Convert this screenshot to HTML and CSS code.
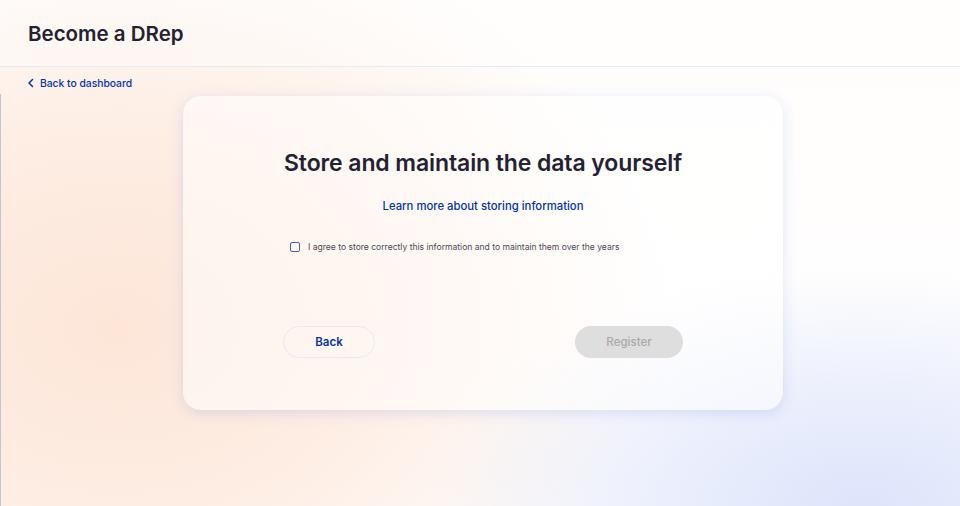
FILE: index.html
```html
<!DOCTYPE html>
<html lang="en">
<head>
<meta charset="utf-8">
<title>Become a DRep</title>
<link rel="stylesheet" href="styles.css">
</head>
<body>
<div class="page">
  <header class="topbar">
    <h1 class="title">Become a DRep</h1>
  </header>
  <a class="back-link" href="#">
    <svg class="chev" width="8" height="10" viewBox="0 0 8 10" aria-hidden="true"><path d="M5.5 1.5 L2 5 L5.5 8.5" fill="none" stroke="currentColor" stroke-width="1.5" stroke-linecap="round" stroke-linejoin="round"/></svg>
    <span>Back to dashboard</span>
  </a>
  <main class="main">
    <section class="card">
      <h2 class="card-title">Store and maintain the data yourself</h2>
      <a class="learn" href="#">Learn more about storing information</a>
      <label class="agree">
        <span class="box"></span>
        <span class="agree-text">I agree to store correctly this information and to maintain them over the years</span>
      </label>
      <div class="actions">
        <button class="btn btn-back">Back</button>
        <button class="btn btn-register" disabled>Register</button>
      </div>
    </section>
  </main>
</div>
</body>
</html>
```

FILE: styles.css
```css
* { box-sizing: border-box; }
html, body { margin: 0; padding: 0; }
body {
  width: 960px;
  height: 506px;
  overflow: hidden;
  font-family: "Inter", "Open Sans", sans-serif;
  color: #242232;
  background:
    radial-gradient(ellipse 440px 240px at 90% 100%, #dde4fb 0%, rgba(221,228,251,0.6) 45%, rgba(221,228,251,0) 100%),
    radial-gradient(ellipse 560px 420px at 12% 65%, #fde6d8 0%, rgba(253,230,216,0.7) 45%, rgba(253,230,216,0) 100%),
    linear-gradient(180deg, #fffdfc 0%, #ffffff 100%);
}
.page { display: flex; flex-direction: column; height: 506px; }
.topbar {
  height: 67px;
  border-bottom: 1px solid #e6ebf7;
  padding-left: 28px;
  display: flex;
  align-items: center;
  background: rgba(255,255,255,0.35);
}
.title {
  margin: 0;
  font-size: 20.5px;
  font-weight: 600;
  color: #242232;
}
.back-link {
  display: flex;
  align-items: center;
  gap: 5px;
  padding: 8px 0 4px 27px;
  color: #0033ad;
  text-decoration: none;
  font-size: 10.3px;
  font-weight: 500;
  height: 27px;
}
.chev { display: block; }
.main {
  flex: 1;
  border-left: 1px solid #c2c6d3;
  display: flex;
  justify-content: center;
  align-items: flex-start;
  padding-left: 5px;
  padding-top: 2px;
}
.card {
  width: 600px;
  height: 314px;
  border-radius: 18px;
  background: rgba(255,255,255,0.5);
  box-shadow: 0 3px 14px rgba(63,98,220,0.16);
  padding: 53px 100px 0;
  display: flex;
  flex-direction: column;
  align-items: center;
}
.card-title {
  margin: 0;
  font-size: 23px;
  font-weight: 600;
  color: #242232;
  letter-spacing: -0.1px;
  line-height: 28px;
}
.learn {
  margin-top: 21px;
  color: #0033ad;
  text-decoration: none;
  font-size: 11.3px;
  font-weight: 500;
  line-height: 16px;
}
.agree {
  margin-top: 26px;
  align-self: stretch;
  display: flex;
  align-items: center;
  gap: 8px;
  padding-left: 7px;
}
.box {
  width: 10px;
  height: 10px;
  border: 1.5px solid #3f5fc9;
  border-radius: 2px;
  flex: none;
}
.agree-text {
  font-size: 8.55px;
  color: #4a4856;
  line-height: 14px;
}
.actions {
  margin-top: 72px;
  align-self: stretch;
  display: flex;
  justify-content: space-between;
}
.btn {
  height: 32px;
  border-radius: 16px;
  font-family: inherit;
  font-size: 11.5px;
  font-weight: 600;
}
.btn-back {
  width: 92px;
  background: transparent;
  border: 1px solid #ece8f0;
  color: #0033ad;
}
.btn-register {
  width: 108px;
  background: #dedede;
  border: none;
  color: #a9a9a9;
  font-weight: 500;
}
```
